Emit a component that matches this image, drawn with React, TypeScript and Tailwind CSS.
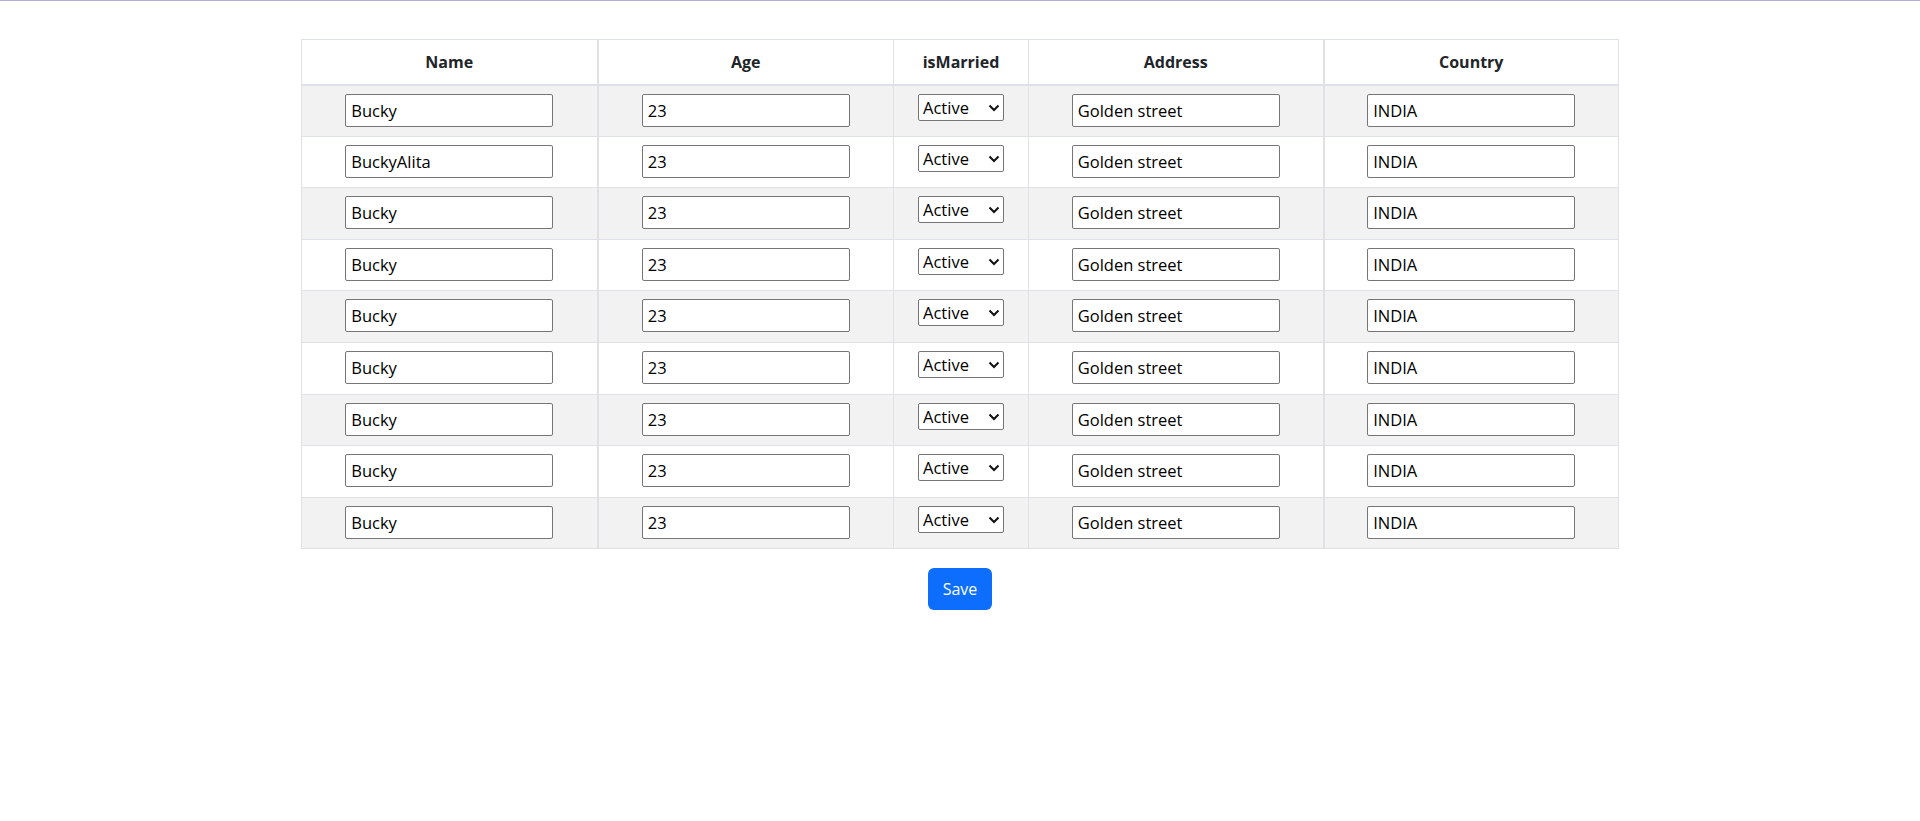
import React, { useState } from "react";

const initialRows = [
  { name: "Bucky", age: "23", status: "Active", address: "Golden street", country: "INDIA" },
  { name: "BuckyAlita", age: "23", status: "Active", address: "Golden street", country: "INDIA" },
  { name: "Bucky", age: "23", status: "Active", address: "Golden street", country: "INDIA" },
  { name: "Bucky", age: "23", status: "Active", address: "Golden street", country: "INDIA" },
  { name: "Bucky", age: "23", status: "Active", address: "Golden street", country: "INDIA" },
  { name: "Bucky", age: "23", status: "Active", address: "Golden street", country: "INDIA" },
  { name: "Bucky", age: "23", status: "Active", address: "Golden street", country: "INDIA" },
  { name: "Bucky", age: "23", status: "Active", address: "Golden street", country: "INDIA" },
  { name: "Bucky", age: "23", status: "Active", address: "Golden street", country: "INDIA" },
];

const inputCls =
  "w-[208px] h-[33px] border border-[#767676] rounded-[2px] bg-white px-[5px] text-[16.5px] text-black outline-none";

export default function App() {
  const [rows, setRows] = useState(initialRows);

  const handleChange = (idx, field, value) => {
    setRows((prev) => prev.map((r, i) => (i === idx ? { ...r, [field]: value } : r)));
  };

  const handleSave = () => {
    console.log(rows);
  };

  return (
    <div className="min-h-screen bg-white border-t border-[#b3add4] font-['Open_Sans',sans-serif] text-[#212529]">
      <div className="pt-[38px] flex flex-col items-center">
        <table className="w-[1317px] table-fixed border-collapse border border-[#dee2e6] text-center">
          <colgroup>
            <col className="w-[296px]" />
            <col className="w-[296px]" />
            <col className="w-[135px]" />
            <col className="w-[295px]" />
            <col className="w-[295px]" />
          </colgroup>
          <thead>
            <tr className="h-[45px] border-b-2 border-[#dee2e6]">
              <th className="font-bold text-[16px] border-r-2 border-[#dee2e6]">Name</th>
              <th className="font-bold text-[16px] border-r border-[#dee2e6]">Age</th>
              <th className="font-bold text-[16px] border-r border-[#dee2e6]">isMarried</th>
              <th className="font-bold text-[16px] border-r-2 border-[#dee2e6]">Address</th>
              <th className="font-bold text-[16px]">Country</th>
            </tr>
          </thead>
          <tbody>
            {rows.map((r, idx) => (
              <tr
                key={idx}
                className={`h-[51.6px] border-b border-[#dee2e6] ${
                  idx % 2 === 0 ? "bg-[#f2f2f2]" : "bg-white"
                }`}
              >
                <td className="align-top pt-[8px] border-r-2 border-[#dee2e6]">
                  <input
                    className={inputCls}
                    value={r.name}
                    onChange={(e) => handleChange(idx, "name", e.target.value)}
                  />
                </td>
                <td className="align-top pt-[8px] border-r border-[#dee2e6]">
                  <input
                    className={inputCls}
                    value={r.age}
                    onChange={(e) => handleChange(idx, "age", e.target.value)}
                  />
                </td>
                <td className="align-top pt-[8px] border-r border-[#dee2e6]">
                  <span className="relative inline-block align-top">
                    <select
                      className="appearance-none block w-[86px] h-[27px] border border-[#767676] rounded-[2px] bg-white pl-[4px] text-[16.5px] leading-[25px] text-black outline-none"
                      value={r.status}
                      onChange={(e) => handleChange(idx, "status", e.target.value)}
                    >
                      <option>Active</option>
                      <option>Inactive</option>
                    </select>
                    <svg
                      className="pointer-events-none absolute right-[4px] top-[10px]"
                      width="12"
                      height="8"
                      viewBox="0 0 12 8"
                    >
                      <polyline points="1.5,1.5 6,6 10.5,1.5" fill="none" stroke="#111" strokeWidth="2" />
                    </svg>
                  </span>
                </td>
                <td className="align-top pt-[8px] border-r-2 border-[#dee2e6]">
                  <input
                    className={inputCls}
                    value={r.address}
                    onChange={(e) => handleChange(idx, "address", e.target.value)}
                  />
                </td>
                <td className="align-top pt-[8px]">
                  <input
                    className={inputCls}
                    value={r.country}
                    onChange={(e) => handleChange(idx, "country", e.target.value)}
                  />
                </td>
              </tr>
            ))}
          </tbody>
        </table>

        <button
          onClick={handleSave}
          className="mt-[19px] w-[64px] h-[42px] rounded-[6px] bg-[#0d6efd] text-white text-[16px] hover:bg-[#0b5ed7]"
        >
          Save
        </button>
      </div>
    </div>
  );
}
